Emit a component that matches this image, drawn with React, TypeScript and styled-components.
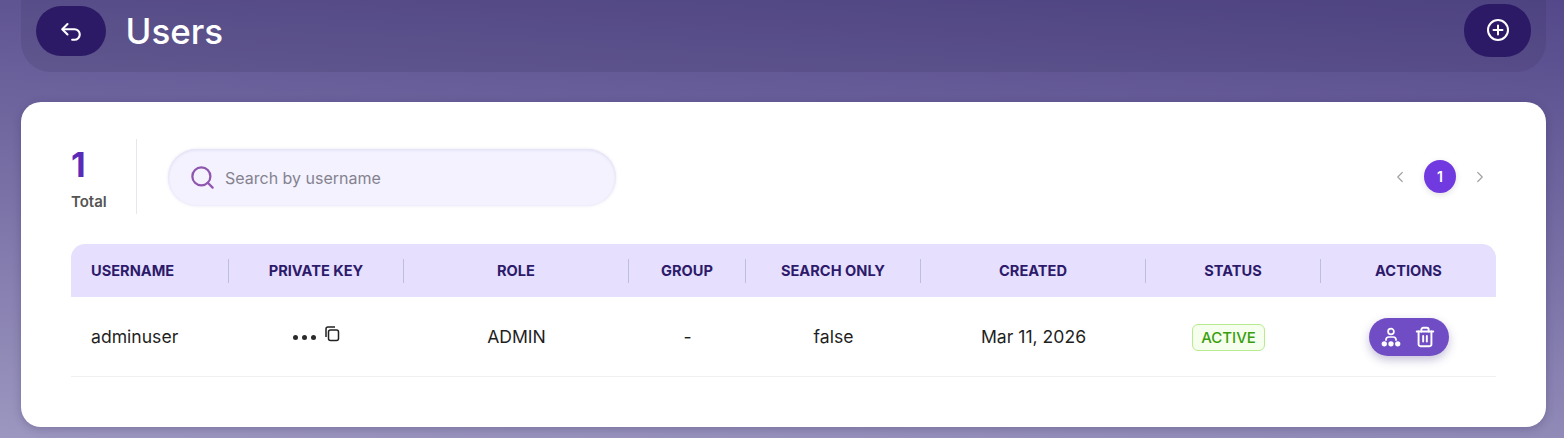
import React from "react";
import styled, { createGlobalStyle } from "styled-components";
import { ChevronLeft, ChevronRight, Search, Trash2 } from "lucide-react";

const GlobalStyle = createGlobalStyle`
  html, body {
    margin: 0;
    height: 438px;
    overflow: hidden;
    font-family: Inter, "Liberation Sans", sans-serif;
  }
`;

const Page = styled.div`
  box-sizing: border-box;
  width: 1564px;
  height: 438px;
  overflow: hidden;
  padding: 0 18px 0 21px;
  background: linear-gradient(183deg, #54488a 0%, #9c97c0 100%);
`;

const Header = styled.header`
  box-sizing: border-box;
  height: 72px;
  display: flex;
  align-items: center;
  justify-content: space-between;
  padding: 0 15px 10px 15px;
  border-radius: 0 0 30px 30px;
  background: rgba(50, 40, 80, 0.15);
`;

const HeaderLeft = styled.div`
  display: flex;
  align-items: center;
  gap: 19.5px;
`;

const RoundButton = styled.button<{ $w: number; $h: number }>`
  width: ${(p) => p.$w}px;
  height: ${(p) => p.$h}px;
  display: flex;
  align-items: center;
  justify-content: center;
  border: none;
  padding: 0;
  border-radius: 26px;
  color: #fff;
  background: #2c1a66;
`;

const AddButton = styled(RoundButton)`
  margin-bottom: 2px;
`;

const Title = styled.h1`
  margin: 0;
  font-size: 35px;
  line-height: 42px;
  font-weight: 500;
  color: #fff;
`;

const Card = styled.main`
  box-sizing: border-box;
  height: 325px;
  margin-top: 30px;
  padding: 37px 50px 0;
  border-radius: 20px;
  background: #fff;
  box-shadow: 0 2px 8px rgba(40, 30, 80, 0.25);
`;

const Toolbar = styled.div`
  height: 75px;
  display: flex;
  align-items: center;
`;

const TotalBox = styled.div`
  box-sizing: border-box;
  width: 66px;
  height: 75px;
  border-right: 1px solid #e6e6ee;
  display: flex;
  flex-direction: column;
`;

const TotalNumber = styled.div`
  font-size: 34px;
  line-height: 52px;
  font-weight: 700;
  color: #5b2bb8;
`;

const TotalLabel = styled.div`
  font-size: 15px;
  line-height: 22px;
  font-weight: 600;
  color: #555;
`;

const SearchBox = styled.div`
  box-sizing: border-box;
  width: 448px;
  height: 57px;
  margin: 2px 0 0 31px;
  padding-left: 21px;
  display: flex;
  align-items: center;
  gap: 9px;
  border-radius: 29px;
  background: #f3f2fe;
  color: #8f56b0;
  box-shadow: inset 0 1px 3px rgba(100, 90, 170, 0.14), 0 0 3px rgba(100, 90, 170, 0.14);
`;

const SearchInput = styled.input`
  flex: 1;
  min-width: 0;
  border: none;
  outline: none;
  padding: 0;
  background: transparent;
  font: 400 16px Inter, "Liberation Sans", sans-serif;
  &::placeholder {
    color: #85828f;
    opacity: 1;
  }
`;

const Pager = styled.nav`
  margin-left: auto;
  display: flex;
  align-items: center;
  gap: 8px;
  color: #a3a3a3;
`;

const PagerArrow = styled.span`
  width: 32px;
  height: 32px;
  display: flex;
  align-items: center;
  justify-content: center;
`;

const PagerCurrent = styled.span`
  width: 32px;
  height: 33px;
  display: flex;
  align-items: center;
  justify-content: center;
  border-radius: 50%;
  font-size: 14px;
  font-weight: 600;
  color: #fff;
  background: #7139e0;
  box-shadow: 0 2px 6px rgba(0, 0, 0, 0.12);
`;

const columns = "158px 175px 225px 117px 175px 225px 175px 175px";

const HeadRow = styled.div`
  margin-top: 30px;
  height: 53px;
  display: grid;
  grid-template-columns: ${columns};
  align-items: center;
  border-radius: 14px 14px 0 0;
  background: #e6e0fe;
`;

const HeadCell = styled.div<{ $left?: boolean; $last?: boolean }>`
  box-sizing: border-box;
  height: 24px;
  display: flex;
  align-items: center;
  justify-content: ${(p) => (p.$left ? "flex-start" : "center")};
  padding-left: ${(p) => (p.$left ? "20px" : "0")};
  border-right: ${(p) => (p.$last ? "none" : "1px solid #bcc0dc")};
  font-size: 14.6px;
  font-weight: 700;
  color: #2d1a6b;
`;

const BodyRow = styled.div`
  box-sizing: border-box;
  height: 80px;
  display: grid;
  grid-template-columns: ${columns};
  align-items: center;
  border-bottom: 1px solid #f0f0f0;
`;

const BodyCell = styled.div<{ $left?: boolean }>`
  display: flex;
  align-items: center;
  justify-content: ${(p) => (p.$left ? "flex-start" : "center")};
  padding-left: ${(p) => (p.$left ? "20px" : "0")};
  font-size: 17.6px;
  color: #1f1f1f;
`;

const KeyDots = styled.span`
  display: flex;
  gap: 3.5px;
  margin: 2px 8px 0 0;
`;

const Dot = styled.i`
  width: 5.5px;
  height: 5.5px;
  border-radius: 50%;
  background: #2b2b2b;
`;

const CopyIcon = styled.svg`
  margin-top: -6px;
`;

const StatusTag = styled.span`
  box-sizing: border-box;
  height: 27px;
  margin: 2px 10px 0 0;
  padding: 0 8px;
  display: flex;
  align-items: center;
  border: 1px solid #b7eb8f;
  border-radius: 6px;
  background: #f6ffed;
  font-size: 15px;
  font-weight: 500;
  color: #389e0d;
`;

const ActionPill = styled.div`
  width: 80px;
  height: 38px;
  display: flex;
  align-items: center;
  justify-content: center;
  gap: 13px;
  border-radius: 19px;
  color: #fff;
  background: #704dc4;
  box-shadow: 0 4px 10px rgba(70, 50, 130, 0.3);
`;

function BackIcon() {
  return (
    <svg width="28" height="28" viewBox="0 0 24 24" fill="none" stroke="currentColor" strokeWidth="1.8" strokeLinecap="round" strokeLinejoin="round">
      <path d="M9 6 4.5 10.5 9 15" />
      <path d="M5 10.5h10a4.5 4.5 0 0 1 0 9h-2" />
    </svg>
  );
}

function PlusCircleIcon() {
  return (
    <svg width="24" height="24" viewBox="0 0 24 24" fill="none" stroke="currentColor" strokeLinecap="round">
      <circle cx="12" cy="12" r="10" strokeWidth="2" />
      <path d="M12 7.5v9M7.5 12h9" strokeWidth="2" />
    </svg>
  );
}

function CopySquares() {
  return (
    <CopyIcon width="16" height="16" viewBox="0 0 16 16" fill="none" stroke="#222" strokeWidth="1.5" strokeLinejoin="round">
      <rect x="4.5" y="4" width="10" height="10.5" rx="2" />
      <path d="M2 11V3a2 2 0 0 1 2-2h7" />
    </CopyIcon>
  );
}

function HierarchyIcon() {
  return (
    <svg width="20" height="20" viewBox="0 0 22 22" fill="none" stroke="currentColor" strokeWidth="1.9">
      <circle cx="11" cy="5" r="3.2" />
      <path d="M5.5 15v-1.5a3 3 0 0 1 3-2.5h5a3 3 0 0 1 3 2.5V15" />
      <g fill="currentColor" stroke="none">
        <circle cx="3.6" cy="18.5" r="2.9" />
        <circle cx="11" cy="18.5" r="2.9" />
        <circle cx="18.4" cy="18.5" r="2.9" />
      </g>
    </svg>
  );
}

const heads = ["USERNAME", "PRIVATE KEY", "ROLE", "GROUP", "SEARCH ONLY", "CREATED", "STATUS", "ACTIONS"];

export default function App() {
  return (
    <>
      <GlobalStyle />
      <Page>
        <Header>
          <HeaderLeft>
            <RoundButton $w={70} $h={50}>
              <BackIcon />
            </RoundButton>
            <Title>Users</Title>
          </HeaderLeft>
          <AddButton $w={67} $h={53}>
            <PlusCircleIcon />
          </AddButton>
        </Header>
        <Card>
          <Toolbar>
            <TotalBox>
              <TotalNumber>1</TotalNumber>
              <TotalLabel>Total</TotalLabel>
            </TotalBox>
            <SearchBox>
              <Search size={27} strokeWidth={2} />
              <SearchInput placeholder="Search by username" />
            </SearchBox>
            <Pager>
              <PagerArrow>
                <ChevronLeft size={18} strokeWidth={1.6} />
              </PagerArrow>
              <PagerCurrent>1</PagerCurrent>
              <PagerArrow>
                <ChevronRight size={18} strokeWidth={1.6} />
              </PagerArrow>
            </Pager>
          </Toolbar>
          <HeadRow>
            {heads.map((h, i) => (
              <HeadCell key={h} $left={i === 0} $last={i === heads.length - 1}>
                {h}
              </HeadCell>
            ))}
          </HeadRow>
          <BodyRow>
            <BodyCell $left>adminuser</BodyCell>
            <BodyCell>
              <KeyDots>
                <Dot />
                <Dot />
                <Dot />
              </KeyDots>
              <CopySquares />
            </BodyCell>
            <BodyCell>ADMIN</BodyCell>
            <BodyCell>-</BodyCell>
            <BodyCell>false</BodyCell>
            <BodyCell>Mar 11, 2026</BodyCell>
            <BodyCell>
              <StatusTag>ACTIVE</StatusTag>
            </BodyCell>
            <BodyCell>
              <ActionPill>
                <HierarchyIcon />
                <Trash2 size={22} strokeWidth={2.1} />
              </ActionPill>
            </BodyCell>
          </BodyRow>
        </Card>
      </Page>
    </>
  );
}
